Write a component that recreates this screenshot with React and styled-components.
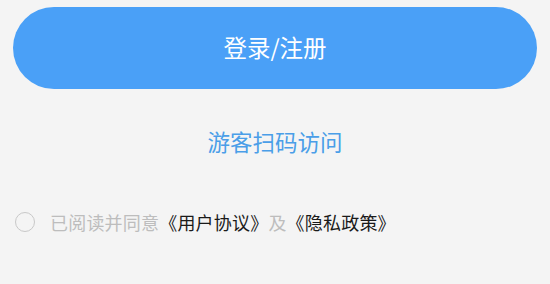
import React, { useState } from 'react';
import styled, { createGlobalStyle } from 'styled-components';

const Global = createGlobalStyle`
    html, body {
        margin: 0;
        padding: 0;
        background: #f4f4f4;
        font-family: "Noto Sans CJK SC", "Noto Sans", sans-serif;
    }
`;

const Page = styled.div`
    display: flex;
    flex-direction: column;
    padding: 7px 13px 0 13px;
    height: 284px;
    box-sizing: border-box;
`;

const LoginButton = styled.button`
    height: 82px;
    padding: 0 0 2px 0;
    border: none;
    border-radius: 41px;
    background: #4aa0f7;
    color: #ffffff;
    font-family: inherit;
    font-size: 23.5px;
    cursor: pointer;
`;

const GuestLink = styled.div`
    margin-top: 36px;
    text-align: center;
    color: #4a9ee8;
    font-size: 22.5px;
    line-height: 32px;
`;

const Agreement = styled.div`
    display: flex;
    align-items: center;
    margin-top: 52px;
    padding-left: 2px;
    font-size: 18px;
    line-height: 26px;
    letter-spacing: 0.2px;
`;

const Radio = styled.span`
    width: 18px;
    height: 18px;
    border-radius: 50%;
    border: 1.5px solid ${p => (p.$checked ? '#4aa0f7' : '#c8c8c8')};
    background: ${p => (p.$checked ? '#4aa0f7' : 'transparent')};
    margin-right: 15px;
    flex-shrink: 0;
`;

const Hint = styled.span`
    color: #bdbdbd;
`;

const Doc = styled.span`
    color: #1a1a1a;
`;

export default function App() {
    const [checked, setChecked] = useState(false);
    return (
        <Page>
            <Global />
            <LoginButton>登录/注册</LoginButton>
            <GuestLink>游客扫码访问</GuestLink>
            <Agreement>
                <Radio $checked={checked} onClick={() => setChecked(!checked)} />
                <Hint>已阅读并同意</Hint>
                <Doc>《用户协议》</Doc>
                <Hint>及</Hint>
                <Doc>《隐私政策》</Doc>
            </Agreement>
        </Page>
    );
}
